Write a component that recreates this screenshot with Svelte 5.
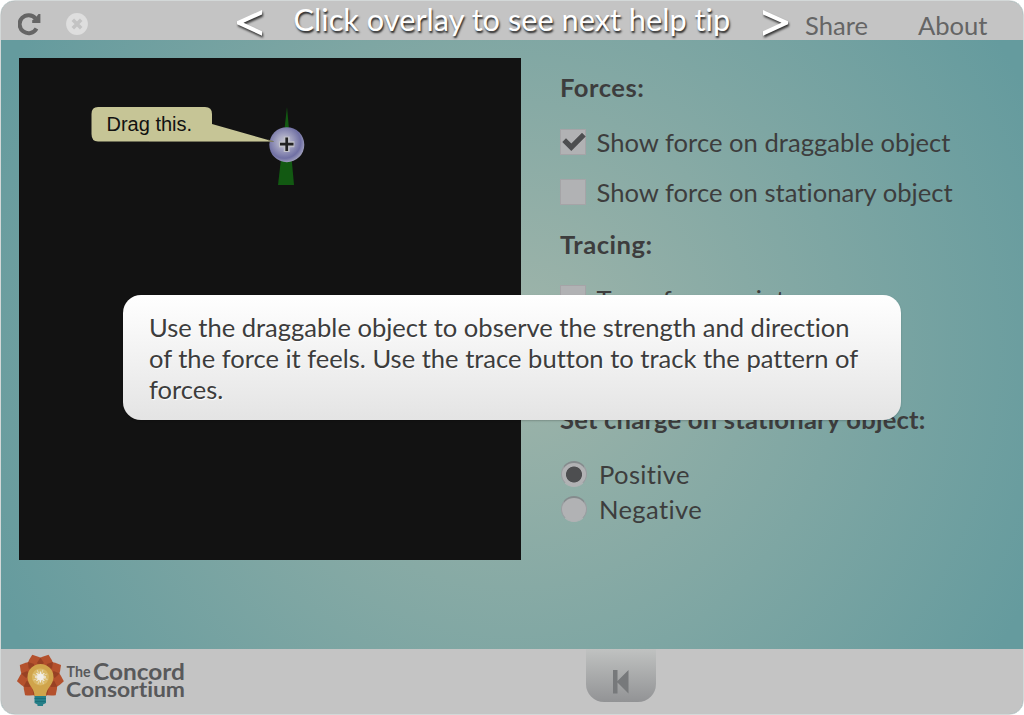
<script>
  const petals = [0, 40, 80, 120, 160, 200, 240, 280, 320];
  const rays = [0, 45, 90, 135];
</script>

<div class="page">
  <header>
    <svg class="reload" width="24" height="24" viewBox="0 0 24 24">
      <path d="M18.500 16.500A9 9 0 1 1 17.600 6.500" fill="none" stroke="#656565" stroke-width="4" />
      <path d="M22.400 2V11H14.200V8.200L17 6.500L20.500 2Z" fill="#656565" />
    </svg>
    <svg class="close" width="22" height="22" viewBox="0 0 22 22">
      <circle cx="11" cy="11" r="10.9" fill="#dedede" />
      <path d="M6.8 6.8L15.2 15.2M15.2 6.8L6.8 15.2" stroke="#c3c3c3" stroke-width="3.6" />
    </svg>
    <span class="share">Share</span>
    <span class="about">About</span>
  </header>

  <main>
    <div class="sim">
      <svg width="502" height="502" viewBox="19 58 502 502">
        <path d="M287 107L294 185H278Z" fill="#125912" />
        <defs>
          <radialGradient id="ball" cx="43%" cy="42%" r="60%">
            <stop offset="0" stop-color="#c3c3cd" />
            <stop offset=".3" stop-color="#aaaac5" />
            <stop offset=".78" stop-color="#7070a4" />
            <stop offset="1" stop-color="#a0a0bd" />
          </radialGradient>
        </defs>
        <circle cx="286.8" cy="144.7" r="17.5" fill="url(#ball)" />
        <path d="M98 107H205Q212 107 212 114V124L273.500 141.500H98Q91.500 141.500 91.500 134V114Q91.500 107 98 107Z" fill="#c6c596" />
        <path d="M149 141.500H273.500L268 140" fill="none" stroke="#77765c" stroke-width=".8" />
        <path d="M286.700 136.500V152M279 144.200H294.400" stroke="#c0c0c9" stroke-width="6" />
        <path d="M286.700 137.500V151M280 144.200H293.500" stroke="#222" stroke-width="2.700" />
        <text x="106.500" y="131" class="bubble">Drag this.</text>
      </svg>
    </div>

    <section class="controls">
      <h2>Forces:</h2>
      <div class="check first">
        <span class="box">
          <svg width="26" height="26" viewBox="0 0 26 26"><path d="M2.300 13L6 9.300L11.300 14.500L22 3.700L25.700 7.500L11.300 22Z" fill="#4d4e50" /></svg>
        </span>
        <span class="label">Show force on draggable object</span>
      </div>
      <div class="check"><span class="box"></span><span class="label">Show force on stationary object</span></div>
      <h2 class="tracing">Tracing:</h2>
      <div class="check trace"><span class="box"></span><span class="label">Trace force points</span></div>
      <h2 class="charge">Set charge on stationary object:</h2>
      <div class="radio"><span class="dial on"></span><span class="label">Positive</span></div>
      <div class="radio"><span class="dial"></span><span class="label">Negative</span></div>
    </section>
  </main>

  <footer>
    <div class="logo">
      <svg width="48" height="54" viewBox="0 0 48 54">
        <g transform="translate(23.4 24)">
          {#each petals as a}
            <path d="M0 0L-9 -15.500Q-5.500 -20 0 -23.800Q5.500 -20 9 -15.500Z" fill="#b4512d" transform="rotate({a + 20})" />
          {/each}
          {#each petals as a}
            <path d="M0 -10L3.500 -14L0 -19.500L-3.500 -14Z" fill="#984124" transform="rotate({a})" />
          {/each}
        </g>
        <path d="M17.500 43C17.500 35 10.500 32 10.500 24A13 13 0 0 1 36.500 24C36.500 32 29 35 29 43Z" fill="#d0a44b" />
        <circle cx="23.4" cy="24" r="8.5" fill="#dab865" />
        <g stroke="#e6d5ad" stroke-width="1">
          {#each rays as a}
            <path d="M23.400 16.500V31.500" transform="rotate({a + 20} 23.4 24)" />
          {/each}
        </g>
        <g stroke="#f0ede6" stroke-width="1.300">
          {#each rays as a}
            <path d="M23.400 18.500V29.500" transform="rotate({a} 23.4 24)" />
          {/each}
        </g>
        <circle cx="23.4" cy="24" r="3.3" fill="#f1eee8" />
        <path d="M17.500 43H29V50L26 51.500V53H20.500V51.500L17.500 50Z" fill="#267f88" />
        <path d="M17.500 45.500H29M18 48.500H28.500" stroke="#176b75" stroke-width=".8" />
      </svg>
      <svg class="words" width="122" height="44" viewBox="0 0 122 44">
        <text x="0.5" y="23.500" font-size="14.5" textLength="24" lengthAdjust="spacingAndGlyphs">The</text>
        <text x="27" y="27" font-size="22.5" textLength="92" lengthAdjust="spacingAndGlyphs">Concord</text>
        <text x="0" y="43.500" font-size="20" textLength="119" lengthAdjust="spacingAndGlyphs">Consortium</text>
      </svg>
    </div>
    <div class="rewind">
      <svg width="16" height="24" viewBox="0 0 16 24"><path d="M0 0H4.500V11L15.500 0V23.500L4.500 12.500V23.500H0Z" fill="#77797b" /></svg>
    </div>
  </footer>

  <div class="hint">
    <svg width="28" height="30" viewBox="0 0 28 30"><path d="M26 1V5.500L7.500 13.800L26 22.200V26.700L1 15.300V12.300Z" /></svg>
    <span>Click overlay to see next help tip</span>
    <svg width="28" height="30" viewBox="0 0 28 30"><path d="M1 1V5.500L19.500 13.800L1 22.200V26.700L26 15.300V12.300Z" /></svg>
  </div>
  <div class="tip">Use the draggable object to observe the strength and direction of the force it feels. Use the trace button to track the pattern of forces.</div>
</div>

<style>
  :global(body) { background: #fff; }
  .page {
    position: relative;
    box-sizing: border-box;
    width: 1024px;
    height: 715px;
    display: flex;
    flex-direction: column;
    overflow: hidden;
    border: 1px solid #d3d8d8;
    border-radius: 15px;
    background: radial-gradient(circle 624px at 511px 344px, #a0b5aa, #659b9e 92%);
    font: 25.6px/31px Lato, sans-serif;
    font-variant-ligatures: none;
    color: #3d3d3d;
  }
  header {
    height: 39px;
    flex: none;
    display: flex;
    background: #c4c4c4;
    color: #656565;
  }
  .reload { margin: 11px 0 0 17px; }
  .close { margin: 12px 0 0 23.500px; }
  .share { margin: 9px 0 0 717.500px; }
  .about { margin: 9px 0 0 50px; }
  main { flex: 1; display: flex; padding: 18px 18px 0; }
  .sim { width: 502px; height: 502px; background: #121212; }
  .sim svg { display: block; }
  .bubble { font: 20px "Liberation Sans", sans-serif; fill: #111; }
  .controls { margin-left: 39px; }
  h2 { margin: 0; padding-top: 14px; font-size: 25.6px; line-height: 31px; font-weight: 700; letter-spacing: .5px; white-space: nowrap; }
  .check { display: flex; gap: 10.500px; align-items: center; height: 31px; margin-top: 19px; white-space: nowrap; }
  .check.first { margin-top: 23px; }
  .box { box-sizing: border-box; width: 26px; height: 26px; border: 1px solid #a5a4a7; background: #b1b2b4; }
  .box svg { display: block; margin: -1px; }
  .label { padding-top: 2px; letter-spacing: .02px; }
  .tracing { padding-top: 22px; }
  .check.trace { margin-top: 22px; }
  .trace .label { padding-top: 4px; }
  .charge { padding-top: 91px; letter-spacing: .2px; }
  .radio { display: flex; gap: 12px; align-items: center; height: 35px; }
  .radio .label { letter-spacing: .35px; }
  .charge + .radio { margin-top: 21px; }
  .dial {
    box-sizing: border-box;
    width: 26px;
    height: 26px;
    margin-left: 1px;
    border-radius: 50%;
    background: #b1b2b4;
    border: 1px solid #999da0;
    border-top: 2px solid #858b8d;
    border-bottom-color: #b1b2b4;
  }
  .dial.on { background: radial-gradient(circle at 50% 50%, #4d4e50 7.6px, #b1b2b4 8.4px); }
  footer { height: 65px; flex: none; display: flex; background: #c4c4c4; }
  .logo { display: flex; width: 585px; padding: 4px 0 0 16px; box-sizing: border-box; }
  .words { margin-left: 1px; overflow: visible; fill: #58595b; font-family: Lato, sans-serif; font-weight: 700; }
  .rewind {
    width: 70px;
    height: 53px;
    display: flex;
    box-sizing: border-box;
    padding: 21px 0 0 27px;
    border-radius: 0 0 18px 18px;
    background: linear-gradient(#c0c2c1, #929395);
  }
  .hint {
    position: absolute;
    left: 235px;
    top: 1px;
    display: flex;
    color: #fff;
    font-size: 30.72px;
    line-height: 35px;
    text-shadow: 1px 2px 2px #222;
    white-space: nowrap;
  }
  .hint span { width: 440px; margin: 0 28px 0 29.500px; }
  .hint svg { margin-top: 7px; fill: #fff; filter: drop-shadow(1px 2px 1px #333); }
  .tip {
    position: absolute;
    left: 122px;
    top: 294px;
    width: 778px;
    height: 125px;
    box-sizing: border-box;
    padding: 17px 26px;
    border-radius: 18px;
    background: linear-gradient(#fff, #e4e4e4);
    box-shadow: 0 1px 2px #0003;
    text-shadow: 1px 1px 1px #fff;
    letter-spacing: -.02px;
  }
</style>
